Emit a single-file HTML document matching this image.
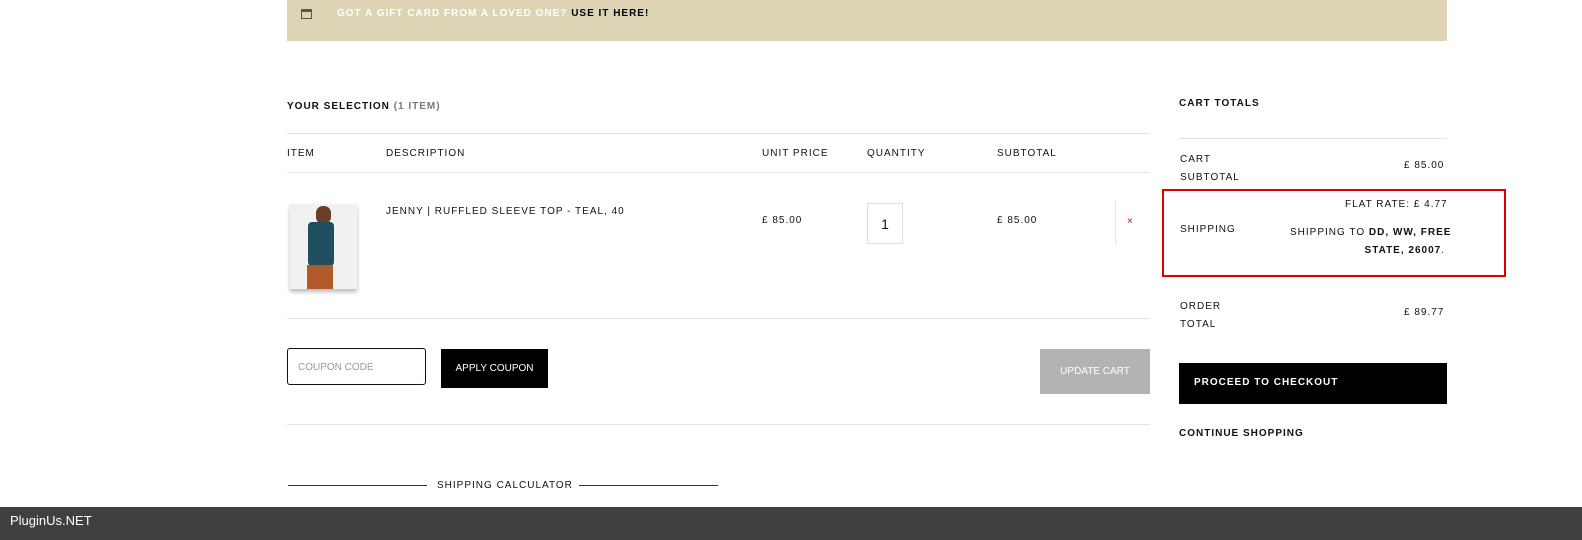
<!DOCTYPE html>
<html><head><style>
body{margin:0;width:1582px;height:540px;position:relative;background:#fff;font-family:"Liberation Sans",sans-serif;overflow:hidden;color:#111}
.a{position:absolute;font-size:10px;letter-spacing:1px;white-space:nowrap}
.b{font-weight:bold}
.hl{position:absolute;height:1px;background:#e2e2e2}
</style></head><body>
<div style="position:absolute;left:287px;top:0;width:1160px;height:41px;background:#ddd4b6"></div>
<div style="position:absolute;left:301px;top:9px;width:9px;height:8px;border:1px solid #555;border-top:3px solid #555;box-sizing:border-box;width:11px;height:10px"></div>
<div class="a b" style="left:337px;top:8px;color:#fff">GOT A GIFT CARD FROM A LOVED ONE? <span style="color:#000">USE IT HERE!</span></div>

<div class="a b" style="left:287px;top:101px;color:#111">YOUR SELECTION <span style="color:#777;font-weight:bold">(1 ITEM)</span></div>
<div class="hl" style="left:287px;top:133px;width:863px"></div>
<div class="a" style="left:287px;top:148px">ITEM</div>
<div class="a" style="left:386px;top:148px">DESCRIPTION</div>
<div class="a" style="left:762px;top:148px">UNIT PRICE</div>
<div class="a" style="left:867px;top:148px">QUANTITY</div>
<div class="a" style="left:997px;top:148px">SUBTOTAL</div>
<div class="hl" style="left:287px;top:172px;width:863px"></div>

<div style="position:absolute;left:290px;top:204px;width:67px;height:85px;background:#f2f0f0;box-shadow:0 3px 4px #bbb">
<div style="position:absolute;left:26px;top:2px;width:15px;height:18px;background:#6b3c26;border-radius:7px"></div>
<div style="position:absolute;left:18px;top:18px;width:26px;height:44px;background:#1f4f5e;border-radius:4px"></div>
<div style="position:absolute;left:17px;top:61px;width:26px;height:24px;background:#b05a2a"></div>
</div>
<div class="a" style="left:386px;top:206px">JENNY | RUFFLED SLEEVE TOP - TEAL, 40</div>
<div class="a" style="left:762px;top:215px">£ 85.00</div>
<div style="position:absolute;left:867px;top:203px;width:36px;height:41px;border:1px solid #ddd;box-sizing:border-box;font-size:14px;text-align:center;line-height:41px">1</div>
<div class="a" style="left:997px;top:215px">£ 85.00</div>
<div class="hl" style="left:1115px;top:200px;width:1px;height:44px"></div>
<div class="a" style="left:1127px;top:216px;color:#d00">×</div>
<div class="hl" style="left:287px;top:318px;width:863px"></div>

<div style="position:absolute;left:287px;top:348px;width:139px;height:37px;border:1px solid #111;border-radius:3px;box-sizing:border-box"></div>
<div class="a" style="left:298px;top:362px;color:#999;letter-spacing:0">COUPON CODE</div>
<div style="position:absolute;left:441px;top:349px;width:107px;height:39px;background:#000;color:#fff;font-size:10px;text-align:center;line-height:39px">APPLY COUPON</div>
<div style="position:absolute;left:1040px;top:349px;width:110px;height:45px;background:#b3b3b3;color:#fff;font-size:10px;text-align:center;line-height:45px">UPDATE CART</div>
<div class="hl" style="left:287px;top:424px;width:863px"></div>

<div style="position:absolute;left:288px;top:485px;width:139px;height:1px;background:#333"></div>
<div class="a" style="left:437px;top:480px">SHIPPING CALCULATOR</div>
<div style="position:absolute;left:579px;top:485px;width:139px;height:1px;background:#333"></div>

<div class="a b" style="left:1179px;top:98px">CART TOTALS</div>
<div class="hl" style="left:1179px;top:138px;width:268px"></div>
<div class="a" style="left:1180px;top:151px;line-height:18px">CART<br>SUBTOTAL</div>
<div class="a" style="left:1404px;top:160px">£ 85.00</div>
<div style="position:absolute;left:1162px;top:189px;width:344px;height:88px;border:2px solid #d00;box-sizing:border-box"></div>
<div class="a" style="left:1345px;top:199px">FLAT RATE: £ 4.77</div>
<div class="a" style="left:1180px;top:224px">SHIPPING</div>
<div class="a" style="left:1290px;top:224px;text-align:right;line-height:18px;width:155px">SHIPPING TO <b>DD, WW, FREE<br>STATE, 26007</b>.</div>
<div class="a" style="left:1180px;top:298px;line-height:18px">ORDER<br>TOTAL</div>
<div class="a" style="left:1404px;top:307px">£ 89.77</div>
<div style="position:absolute;left:1179px;top:363px;width:268px;height:41px;background:#000"></div>
<div class="a b" style="left:1194px;top:377px;color:#fff">PROCEED TO CHECKOUT</div>
<div class="a b" style="left:1179px;top:428px">CONTINUE SHOPPING</div>

<div style="position:absolute;left:0;top:507px;width:1582px;height:33px;background:#404040"></div>
<div style="position:absolute;left:10px;top:513px;color:#fff;font-size:13px">PluginUs.NET</div>
</body></html>
